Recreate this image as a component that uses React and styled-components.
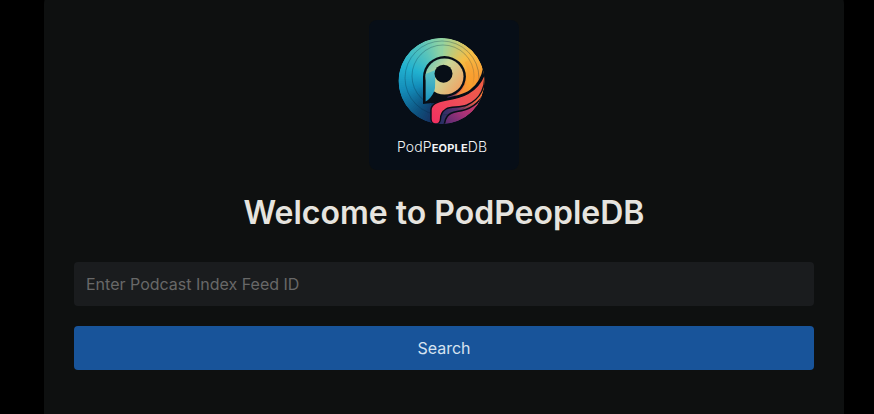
import React from "react"
import styled, { createGlobalStyle } from "styled-components"

const GlobalStyle = createGlobalStyle`
  html, body {
    margin: 0;
    height: 100%;
    background: #000;
    overflow: hidden;
  }
  body, input, button {
    font-family: Inter, "Liberation Sans", sans-serif;
  }
`

const Card = styled.main`
  box-sizing: border-box;
  width: 800px;
  height: 440px;
  margin: -8px 0 0 44px;
  padding: 28px 30px;
  background: #0e1010;
  border-radius: 12px;
  display: flex;
  flex-direction: column;
  align-items: center;
`

const Logo = styled.svg`
  display: block;
  width: 150px;
  height: 150px;
  border-radius: 8px;
`

const Title = styled.h1`
  margin: 23px 0 29px;
  font-size: 32px;
  line-height: 40px;
  font-weight: 600;
  color: #e6e4df;
`

const Form = styled.form`
  width: 100%;
  display: flex;
  flex-direction: column;
  gap: 20px;
`

const FeedInput = styled.input`
  box-sizing: border-box;
  width: 100%;
  height: 44px;
  padding: 0 12px;
  border: 0;
  outline: 0;
  border-radius: 4px;
  background: #1a1c1e;
  color: #e8e6e3;
  font-size: 16px;
  &::placeholder {
    color: #686868;
    opacity: 1;
  }
`

const SearchButton = styled.button`
  height: 44px;
  border: 0;
  border-radius: 4px;
  background: #18549a;
  color: #d7e3f0;
  font-size: 16px;
  cursor: pointer;
`

// angle in degrees clockwise from 12 o'clock -> colour of the disc
const stops = [
  [0, [150, 212, 160]],
  [45, [246, 190, 70]],
  [90, [250, 148, 46]],
  [118, [240, 100, 66]],
  [150, [90, 48, 110]],
  [190, [24, 48, 96]],
  [215, [14, 80, 125]],
  [255, [20, 140, 185]],
  [290, [34, 178, 208]],
  [330, [90, 196, 186]],
  [360, [150, 212, 160]],
]

function colourAt(deg) {
  let i = 0
  while (i < stops.length - 2 && stops[i + 1][0] <= deg) i++
  const [a, ca] = stops[i]
  const [b, cb] = stops[i + 1]
  const t = (deg - a) / (b - a)
  return `rgb(${ca.map((c, n) => Math.round(c + (cb[n] - c) * t)).join(",")})`
}

const CX = 72.5
const CY = 61
const R = 43
const BG = "#070e17"

function wedges() {
  const out = []
  for (let deg = 0; deg < 360; deg += 3) {
    const a = ((deg - 90) * Math.PI) / 180
    const b = ((deg + 6 - 90) * Math.PI) / 180
    const d = `M${CX} ${CY}L${CX + R * Math.cos(a)} ${CY + R * Math.sin(a)}A${R} ${R} 0 0 1 ${CX + R * Math.cos(b)} ${CY + R * Math.sin(b)}Z`
    out.push(<path key={deg} d={d} fill={colourAt(deg)} />)
  }
  return out
}

const DRIP = "M62 99L62 90C62 84 68 81.5 77 80C92 78 108 73 115.5 54C117 66 112 79 98 85C90 88 82 86 77 89C73 91.5 71.5 94 71.5 99C71.5 105.5 62 105.5 62 99Z"
const UNDER = "M75 108C75.5 97 79 93 88 91.5C100 90 110 84 116 72L120 112L75 112Z"

function PodLogo() {
  return (
    <Logo viewBox="0 0 150 150">
      <defs>
        <linearGradient id="bowl" x1="0" y1="0" x2="1" y2="0.7">
          <stop offset="0" stopColor="#58c2bd" />
          <stop offset="0.45" stopColor="#c9d99a" />
          <stop offset="1" stopColor="#f0a565" />
        </linearGradient>
        <linearGradient id="stem" x1="0" y1="0" x2="0" y2="1">
          <stop offset="0" stopColor="#5cc3c4" />
          <stop offset="1" stopColor="#1a94c2" />
        </linearGradient>
        <linearGradient id="drip" x1="0" y1="1" x2="1" y2="0">
          <stop offset="0" stopColor="#f22e62" />
          <stop offset="0.5" stopColor="#ee4f58" />
          <stop offset="1" stopColor="#f0603e" />
        </linearGradient>
        <linearGradient id="under" x1="0" y1="1" x2="1" y2="0">
          <stop offset="0" stopColor="#3a2a70" />
          <stop offset="0.45" stopColor="#a83278" />
          <stop offset="1" stopColor="#ee4450" />
        </linearGradient>
        <linearGradient id="wrap" x1="1" y1="0" x2="0" y2="1">
          <stop offset="0" stopColor="#f9a02e" stopOpacity="0" />
          <stop offset="0.3" stopColor="#f9a02e" />
          <stop offset="1" stopColor="#f0634e" />
        </linearGradient>
        <clipPath id="disc">
          <circle cx={CX} cy={CY} r={R} />
        </clipPath>
      </defs>
      <rect width="150" height="150" fill={BG} />
      <g clipPath="url(#disc)">
        {wedges()}
        <g fill="none" stroke="#02263c" strokeOpacity="0.28" strokeWidth="1">
          <circle cx="73" cy="58" r="37" />
          <circle cx="74" cy="56" r="31" />
        </g>
        <path d="M100 40A30 30 0 0 1 70 84" fill="none" stroke="url(#wrap)" strokeWidth="10" />
        <path d={UNDER} fill="url(#under)" stroke={BG} strokeWidth="1.6" />
        <path d="M62 82C72 80 92 78.5 102 71C110 65 114 58 115.5 48" fill="none" stroke={BG} strokeWidth="3" />
        <path d={DRIP} fill="url(#drip)" stroke={BG} strokeWidth="1.4" />
      </g>
      {/* gap round the bowl */}
      <ellipse cx="75.5" cy="56.5" rx="21.4" ry="20.4" fill={BG} />
      <path d="M54 56L54 84L62 83L78 79L80 70Z" fill={BG} />
      <ellipse cx="75.5" cy="56.5" rx="19" ry="18" fill="url(#bowl)" />
      <path d="M56.6 54L56.6 81.5C61 79 65 74 66 68L66.5 50Z" fill="url(#stem)" />
      <circle cx="74.5" cy="53.7" r="9" fill={BG} />
      <text x="28" y="132" textLength="90" fontFamily="Inter, sans-serif" fontSize="14" fontWeight="300" fill="#f2f4f6">
        PodP
        <tspan fontSize="11" fontWeight="700">EOPLE</tspan>
        DB
      </text>
    </Logo>
  )
}

export default function App() {
  return (
    <>
      <GlobalStyle />
      <Card>
        <PodLogo />
        <Title>Welcome to PodPeopleDB</Title>
        <Form onSubmit={(e) => e.preventDefault()}>
          <FeedInput placeholder="Enter Podcast Index Feed ID" />
          <SearchButton>Search</SearchButton>
        </Form>
      </Card>
    </>
  )
}
